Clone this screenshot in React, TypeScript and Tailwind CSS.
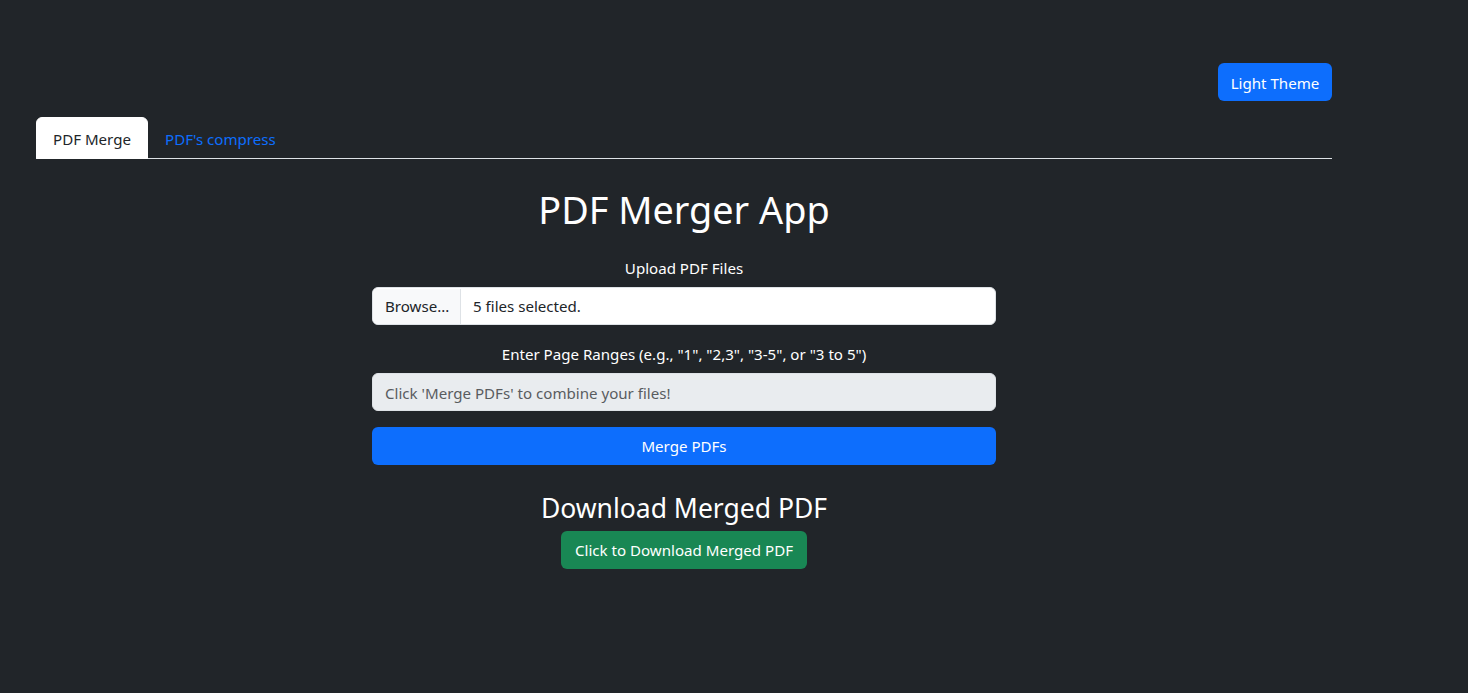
import React from "react";

export default function App() {
  return (
    <div
      className="min-h-screen w-full bg-[#212529] text-white"
      style={{ fontFamily: '"Noto Sans", "Open Sans", sans-serif' }}
    >
      <div className="ml-[24px] w-[1320px] px-3">
        <div className="flex justify-end pt-[63px]">
          <button className="h-[38px] w-[114px] rounded-md bg-[#0d6efd] pt-px text-[15.1px] leading-6 text-white">
            Light Theme
          </button>
        </div>

        <div className="mt-4 flex border-b border-[#dee2e6]">
          <button className="-mb-px h-[42px] w-[112px] rounded-t-md border border-white bg-white pt-px text-[15.1px] leading-6 text-[#212529]">
            PDF Merge
          </button>
          <button className="-mb-px h-[42px] rounded-t-md border border-transparent px-4 pt-px text-[15.1px] leading-6 text-[#0d6efd]">
            PDF's compress
          </button>
        </div>

        <div className="flex flex-col items-center">
          <h1 className="mt-[27px] text-[37.8px] leading-[48px] font-normal text-white">PDF Merger App</h1>

          <div className="mt-[22px] flex w-[624px] flex-col">
            <label className="text-center text-[15.1px] leading-6 text-white">Upload PDF Files</label>
            <div className="mt-[7px] flex h-[38px] overflow-hidden rounded-md border border-[#dee2e6] bg-white pt-px text-[15.1px] text-[#212529]">
              <div className="flex w-[88px] items-center border-r border-[#dee2e6] bg-[#f8f9fa] px-3">Browse...</div>
              <div className="flex items-center px-3">5 files selected.</div>
            </div>

            <label className="mt-[17px] text-center text-[15.1px] leading-6 text-white">
              Enter Page Ranges (e.g., "1", "2,3", "3-5", or "3 to 5")
            </label>
            <input
              disabled
              placeholder="Click 'Merge PDFs' to combine your files!"
              className="mt-[7px] h-[38px] rounded-md border border-[#dee2e6] bg-[#e9ecef] px-3 pt-px text-[15.1px] text-[#212529] placeholder:text-[#595c5f]"
            />

            <button className="mt-4 h-[38px] rounded-md bg-[#0d6efd] pt-px text-[15.1px] text-white">Merge PDFs</button>
          </div>

          <h3 className="mt-[26px] text-[26.5px] leading-[34px] font-normal text-white">Download Merged PDF</h3>
          <button className="mt-[6px] h-[38px] w-[246px] rounded-md bg-[#198754] pt-px text-[15.1px] text-white">
            Click to Download Merged PDF
          </button>
        </div>
      </div>
    </div>
  );
}
